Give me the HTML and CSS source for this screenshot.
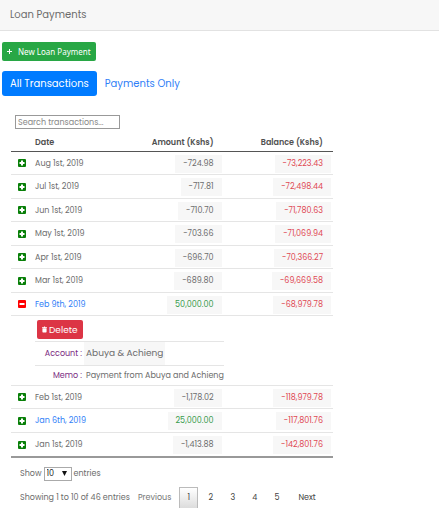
FILE: index.html
```html
<!DOCTYPE html>
<html lang="en">
<head>
<meta charset="utf-8">
<meta name="viewport" content="width=device-width, initial-scale=1">
<title>Loan Payments</title>
<link rel="stylesheet" href="styles.css">
</head>
<body>
<svg class="sprite" aria-hidden="true">
  <symbol id="plus" viewBox="0 0 8 8"><rect width="8" height="8" rx="1" fill="#087f08"/><path d="M4 1.5v5M1.5 4h5" stroke="#fff" stroke-width="2"/></symbol>
  <symbol id="minus" viewBox="0 0 8 8"><rect width="8" height="8" rx="1" fill="#f00"/><path d="M1.5 4h5" stroke="#fff" stroke-width="2"/></symbol>
</svg>
<header class="page-header"><h1>Loan Payments</h1></header>
<main>
  <button class="btn btn-new" type="button"><svg class="icon-add" viewBox="0 0 5 5" aria-hidden="true"><path d="M2.5 0v5M0 2.5h5" stroke="#fff"/></svg>New Loan Payment</button>
  <nav class="tabs"><a class="tab active" href="#all">All Transactions</a><a class="tab" href="#payments">Payments Only</a></nav>
  <section class="transactions">
    <input class="search" type="search" placeholder="Search transactions..." aria-label="Search transactions">
    <table class="ledger">
      <thead><tr><th class="toggle-col"></th><th class="date">Date</th><th class="amount">Amount (Kshs)</th><th class="balance">Balance (Kshs)</th></tr></thead>
      <tbody>
        <tr><td><button class="toggle" type="button" aria-label="Expand"><svg><use href="#plus"/></svg></button></td><td>Aug 1st, 2019</td><td class="num"><span>-724.98</span></td><td class="num debt"><span>-73,223.43</span></td></tr>
        <tr class="tall"><td><button class="toggle" type="button" aria-label="Expand"><svg><use href="#plus"/></svg></button></td><td>Jul 1st, 2019</td><td class="num"><span>-717.81</span></td><td class="num debt"><span>-72,498.44</span></td></tr>
        <tr><td><button class="toggle" type="button" aria-label="Expand"><svg><use href="#plus"/></svg></button></td><td>Jun 1st, 2019</td><td class="num"><span>-710.70</span></td><td class="num debt"><span>-71,780.63</span></td></tr>
        <tr class="tall"><td><button class="toggle" type="button" aria-label="Expand"><svg><use href="#plus"/></svg></button></td><td>May 1st, 2019</td><td class="num"><span>-703.66</span></td><td class="num debt"><span>-71,069.94</span></td></tr>
        <tr><td><button class="toggle" type="button" aria-label="Expand"><svg><use href="#plus"/></svg></button></td><td>Apr 1st, 2019</td><td class="num"><span>-696.70</span></td><td class="num debt"><span>-70,366.27</span></td></tr>
        <tr class="tall"><td><button class="toggle" type="button" aria-label="Expand"><svg><use href="#plus"/></svg></button></td><td>Mar 1st, 2019</td><td class="num"><span>-689.80</span></td><td class="num debt"><span>-69,669.58</span></td></tr>
        <tr><td><button class="toggle" type="button" aria-label="Collapse"><svg><use href="#minus"/></svg></button></td><td><a href="#feb9">Feb 9th, 2019</a></td><td class="num paid"><span>50,000.00</span></td><td class="num debt"><span>-68,979.78</span></td></tr>
        <tr class="detail"><td></td><td colspan="3">
          <button class="btn btn-delete" type="button"><svg class="icon-trash" viewBox="0 0 6 7" aria-hidden="true"><path d="M0 .7h2L2.4 0h1.2L4 .7h2v1H0zM.5 2h5v4.3q0 .7-.7.7H1.2q-.7 0-.7-.7z" fill="#fff"/></svg>Delete</button>
          <table class="facts">
            <tbody>
              <tr><th>Account :</th><td><span class="account">Abuya &amp; Achieng</span></td></tr>
              <tr><th>Memo :</th><td>Payment from Abuya and Achieng</td></tr>
            </tbody>
          </table>
        </td></tr>
        <tr><td><button class="toggle" type="button" aria-label="Expand"><svg><use href="#plus"/></svg></button></td><td>Feb 1st, 2019</td><td class="num"><span>-1,178.02</span></td><td class="num debt"><span>-118,979.78</span></td></tr>
        <tr class="tall"><td><button class="toggle" type="button" aria-label="Expand"><svg><use href="#plus"/></svg></button></td><td><a href="#jan6">Jan 6th, 2019</a></td><td class="num paid"><span>25,000.00</span></td><td class="num debt"><span>-117,801.76</span></td></tr>
        <tr><td><button class="toggle" type="button" aria-label="Expand"><svg><use href="#plus"/></svg></button></td><td>Jan 1st, 2019</td><td class="num"><span>-1,413.88</span></td><td class="num debt"><span>-142,801.76</span></td></tr>
      </tbody>
    </table>
    <div class="length"><label for="len">Show</label><span class="select-wrap"><select id="len"><option>10</option><option>25</option><option>50</option></select><svg viewBox="0 0 6 6" aria-hidden="true"><path d="M0 0h6L3 6z" fill="#111"/></svg></span><span>entries</span></div>
    <div class="footer">
      <span class="info">Showing 1 to 10 of 46 entries</span>
      <nav class="pager" aria-label="Pages"><a class="prev" href="#prev">Previous</a><a class="current" href="#1">1</a><a href="#2">2</a><a href="#3">3</a><a href="#4">4</a><a href="#5">5</a><a class="next" href="#next">Next</a></nav>
    </div>
  </section>
</main>
</body>
</html>
```
FILE: styles.css
```css
* { box-sizing: border-box; }
body {
  margin: 0;
  background: #fff;
  color: #6c6c6c;
  font: 8px/12px Poppins, Inter, "Liberation Sans", sans-serif;
}
button, input, select { font: inherit; }
a { color: #2f80f7; text-decoration: none; }
.sprite { display: none; }

.page-header {
  padding: 7px 10px;
  background: #f7f7f7;
  border-bottom: 1px solid #e2e2e2;
}
.page-header h1 { margin: 0; font-size: 10px; line-height: 16px; font-weight: 400; }

main { padding: 11px 2px 0; }
.btn {
  display: flex;
  align-items: center;
  height: 19px;
  padding: 0 5px;
  border: 0;
  border-radius: 2px;
  color: #fff;
}
.btn-new { gap: 6px; background: #28a745; font-family: "Noto Sans", sans-serif; }
.icon-add { width: 5px; height: 5px; }

.tabs { display: flex; margin-top: 10px; }
.tab { padding: 0 8px; border-radius: 3px; font-size: 10px; line-height: 25px; }
.tab.active { background: #007bff; color: #fff; }

.transactions { max-width: 331px; padding: 19px 0 0 9px; }
.search {
  display: block;
  width: 105px;
  height: 14px;
  margin-left: 4px;
  padding: 1px 2px 0;
  border: 1px solid #999;
  background: #fff;
  appearance: none;
}
.search::placeholder { color: #888; opacity: 1; }

.ledger { width: 100%; margin-top: 5px; border-collapse: separate; border-spacing: 0; table-layout: fixed; border-bottom: 2px solid #999; }
.ledger th, .ledger td { padding: 1px 0 0; text-align: left; }
.ledger > thead th { height: 18px; border-bottom: 1px solid #555; color: #505050; font-weight: 600; }
.toggle-col { width: 24px; }
.date { width: 25%; }
.ledger > thead .amount, .ledger > thead .balance { padding-right: 10px; text-align: right; }
.balance { width: 34%; }
.ledger > tbody > tr > td { height: 23px; border-bottom: 1px solid #e5e5e5; }
.ledger > tbody > .tall > td { height: 24px; }
.ledger > tbody > tr:last-child > td { border-bottom: 0; }
.ledger > tbody > tr > td:first-child { padding-top: 0; }
.ledger .num { padding-right: 2px; text-align: right; }
.num span { display: inline-block; padding: 0 8px; background: #f7f7f7; line-height: 18px; vertical-align: middle; }
.debt { color: #df4753; }
.paid { color: #369b4b; }
.toggle { display: block; width: 8px; height: 8px; margin-left: 7px; padding: 0; border: 0; background: none; }
.toggle svg { display: block; width: 8px; height: 8px; }

.ledger > tbody > .detail > td { padding-top: 4px; vertical-align: top; }
.btn-delete { gap: 2px; margin-left: 2px; background: #dc3545; font-size: 9px; }
.icon-trash { width: 5px; height: 7px; }
.facts { margin-top: 2px; border-spacing: 0; }
.facts th { width: 49px; font-weight: 400; color: #7b2a82; }
.facts th, .facts td { height: 20px; border-top: 1px solid #e5e5e5; }
.facts tr:first-child > * { height: 24px; }
.ledger .facts th { padding: 0 2px 0 0; text-align: right; }
.ledger .facts td { padding: 0; white-space: nowrap; }
.account { display: inline-block; padding: 0 2px; background: #f7f7f7; font-size: 9px; line-height: 23px; vertical-align: middle; }
.ledger .facts tr:last-child td { padding-left: 2px; }

.length { display: flex; align-items: center; gap: 2px; margin: 9px 0 0 9px; }
.select-wrap { position: relative; display: flex; }
.select-wrap select { width: 28px; height: 14px; padding: 0 2px; border: 1px solid #aaa; border-radius: 0; background: #fff; color: #222; appearance: none; }
.select-wrap svg { position: absolute; right: 5px; top: 4px; width: 5px; height: 5px; pointer-events: none; }

.footer { display: flex; align-items: center; margin: 6px 0 0 9px; white-space: nowrap; }
.pager { display: flex; gap: 3px; }
.pager a { width: 19px; line-height: 20px; border: 1px solid transparent; color: #444; text-align: center; }
.pager .current { border-color: #bbb; background: linear-gradient(#fff, #dcdcdc); }
.pager .prev { width: auto; padding: 0 4px 0 7px; color: #777; }
.pager .next { width: auto; padding-left: 8px; }
```
